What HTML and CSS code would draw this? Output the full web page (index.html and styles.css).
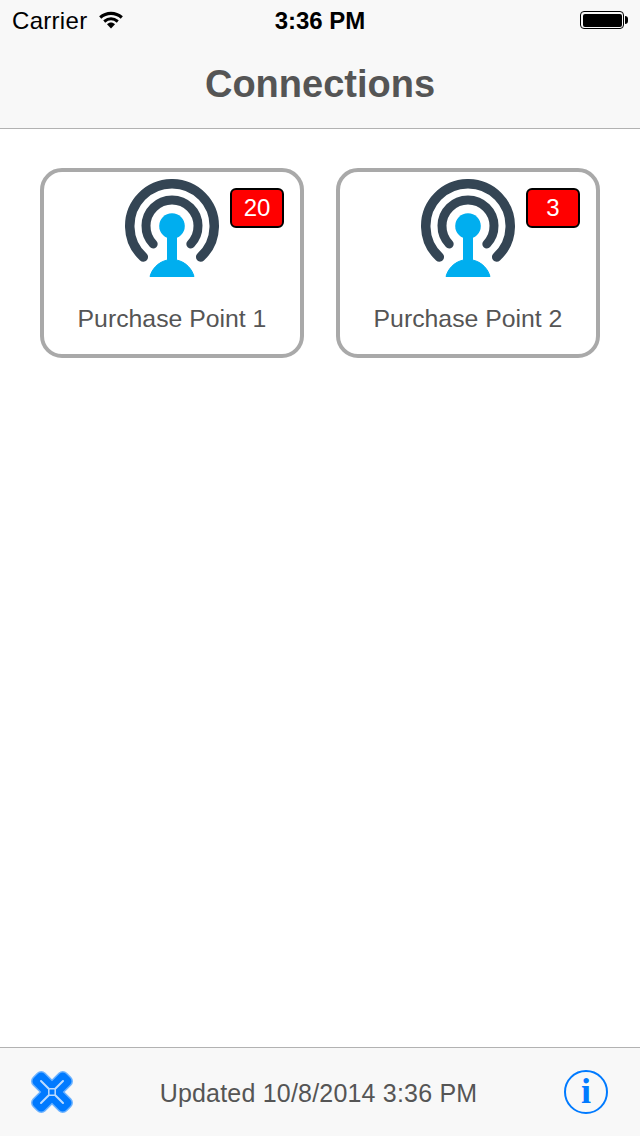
FILE: index.html
```html
<!DOCTYPE html>
<html lang="en">
<head>
  <meta charset="UTF-8">
  <title>Connections</title>
  <meta name="viewport" content="width=device-width, initial-scale=1.0">
  <link rel="stylesheet" href="styles.css">
</head>
<body>
  <header class="top-bar">
    <div class="status-bar">
      <div class="status-left">
        <span class="carrier">Carrier</span>
        <svg class="wifi" width="24" height="18" viewBox="0 0 24 18">
          <path d="M1.200 6.500C7.500 1 16.500 1 22.800 6.500" fill="none" stroke="#000" stroke-width="3.200"/>
          <path d="M5.200 10.500C9.500 7 14.500 7 18.800 10.500" fill="none" stroke="#000" stroke-width="3"/>
          <path d="M8 13.300C10.500 11 13.500 11 16 13.300L12 17.500Z" fill="#000"/>
        </svg>
      </div>
      <div class="status-time">3:36 PM</div>
      <div class="status-right">
        <div class="battery"><div class="battery-fill"></div></div>
        <div class="battery-tip"></div>
      </div>
    </div>
    <h1 class="title">Connections</h1>
  </header>

  <main class="cards">
    <div class="card">
      <svg class="beacon" width="96" height="100" viewBox="0 0 96 100">
        <path d="M19.300 78A42.250 42.250 0 1 1 76.700 78" fill="none" stroke="#344554" stroke-width="9.500" stroke-linecap="round"/>
        <path d="M29.200 65A26 26 0 1 1 66.800 65" fill="none" stroke="#344554" stroke-width="9" stroke-linecap="round"/>
        <circle cx="48" cy="47" r="12.800" fill="#00aeef"/>
        <path d="M43.500 50H52.500V81C62 83 68 90 70 97.500H26C28 90 34 83 43.500 81Z" fill="#00aeef" stroke="#00aeef" stroke-linejoin="round"/>
      </svg>
      <div class="card-label">Purchase Point 1</div>
      <div class="badge">20</div>
    </div>
    <div class="card">
      <svg class="beacon" width="96" height="100" viewBox="0 0 96 100">
        <path d="M19.300 78A42.250 42.250 0 1 1 76.700 78" fill="none" stroke="#344554" stroke-width="9.500" stroke-linecap="round"/>
        <path d="M29.200 65A26 26 0 1 1 66.800 65" fill="none" stroke="#344554" stroke-width="9" stroke-linecap="round"/>
        <circle cx="48" cy="47" r="12.800" fill="#00aeef"/>
        <path d="M43.500 50H52.500V81C62 83 68 90 70 97.500H26C28 90 34 83 43.500 81Z" fill="#00aeef" stroke="#00aeef" stroke-linejoin="round"/>
      </svg>
      <div class="card-label">Purchase Point 2</div>
      <div class="badge">3</div>
    </div>
  </main>

  <footer class="bottom-bar">
    <svg class="logo" width="42" height="42" viewBox="0 0 42 42">
      <g transform="rotate(45 21 21)">
        <rect x="-3.200" y="12" width="48.400" height="18" rx="6" fill="#6db3ff"/>
        <rect x="12" y="-3.200" width="18" height="48.400" rx="6" fill="#6db3ff"/>
        <rect x="-1.700" y="13.500" width="45.400" height="15" rx="4.500" fill="#007aff"/>
        <rect x="13.500" y="-1.700" width="15" height="45.400" rx="4.500" fill="#007aff"/>
      </g>
      <path d="M10 10L18 18M24 24L32 32M32 10L24 18M18 24L10 32" fill="none" stroke="#bcdcff" stroke-width="2" stroke-linecap="round"/>
      <rect x="17.800" y="17.800" width="6.400" height="6.400" rx="1" fill="#007aff" stroke="#bcdcff" stroke-width="1.500"/>
    </svg>
    <div class="updated">Updated 10/8/2014 3:36 PM</div>
    <div class="info">i</div>
  </footer>
</body>
</html>
```

FILE: styles.css
```css
* {
  box-sizing: border-box;
}
body {
  margin: 0;
  height: 1136px;
  display: flex;
  flex-direction: column;
  background: #fff;
  font-family: 'Liberation Sans', Arial, sans-serif;
  overflow: hidden;
}
.top-bar {
  height: 129px;
  background: #f8f8f8;
  border-bottom: 1px solid #b2b2b2;
}
.status-bar {
  height: 40px;
  padding: 0 12px;
  display: flex;
  align-items: center;
  justify-content: space-between;
  position: relative;
  font-size: 24px;
  color: #000;
}
.status-left {
  display: flex;
  align-items: center;
  gap: 12px;
}
.carrier {
  padding-top: 2px;
  letter-spacing: 0.3px;
}
.status-time {
  position: absolute;
  left: 0;
  right: 0;
  padding-top: 2px;
  text-align: center;
  font-weight: bold;
}
.status-right {
  display: flex;
  align-items: center;
}
.battery {
  width: 44px;
  height: 18px;
  padding: 1.500px;
  border: 1px solid #000;
  border-radius: 4px;
}
.battery-fill {
  height: 100%;
  background: #000;
  border-radius: 2px;
}
.battery-tip {
  width: 3px;
  height: 8px;
  margin-left: 1px;
  background: #000;
  border-radius: 0 3px 3px 0;
}
.title {
  margin: 0;
  height: 88px;
  line-height: 88px;
  text-align: center;
  font-size: 38px;
  font-weight: bold;
  color: #555;
}
.cards {
  flex: 1;
  padding: 39px 40px 0;
  display: grid;
  grid-template-columns: 264px 264px;
  grid-auto-rows: 190px;
  gap: 32px;
}
.card {
  position: relative;
  padding-top: 7px;
  display: flex;
  flex-direction: column;
  align-items: center;
  border: 4px solid #a9a9a9;
  border-radius: 22px;
  background: #fff;
}
.beacon {
  display: block;
}
.card-label {
  margin-top: 26px;
  font-size: 24.800px;
  line-height: 28px;
  color: #555;
}
.badge {
  position: absolute;
  top: 16px;
  right: 16px;
  width: 54px;
  height: 40px;
  line-height: 36px;
  text-align: center;
  font-size: 24px;
  color: #fff;
  background: #f00;
  border: 2px solid #000;
  border-radius: 6px;
}
.bottom-bar {
  height: 89px;
  padding: 0 32px 0 31px;
  display: flex;
  align-items: center;
  justify-content: space-between;
  background: #f8f8f8;
  border-top: 1px solid #b2b2b2;
}
.updated {
  padding-top: 2px;
  font-size: 25px;
  letter-spacing: 0.2px;
  color: #555;
}
.info {
  width: 44px;
  height: 44px;
  border: 2px solid #007aff;
  border-radius: 50%;
  text-align: center;
  line-height: 39px;
  font-family: 'Liberation Serif', serif;
  font-size: 36px;
  font-weight: bold;
  color: #007aff;
}
```
